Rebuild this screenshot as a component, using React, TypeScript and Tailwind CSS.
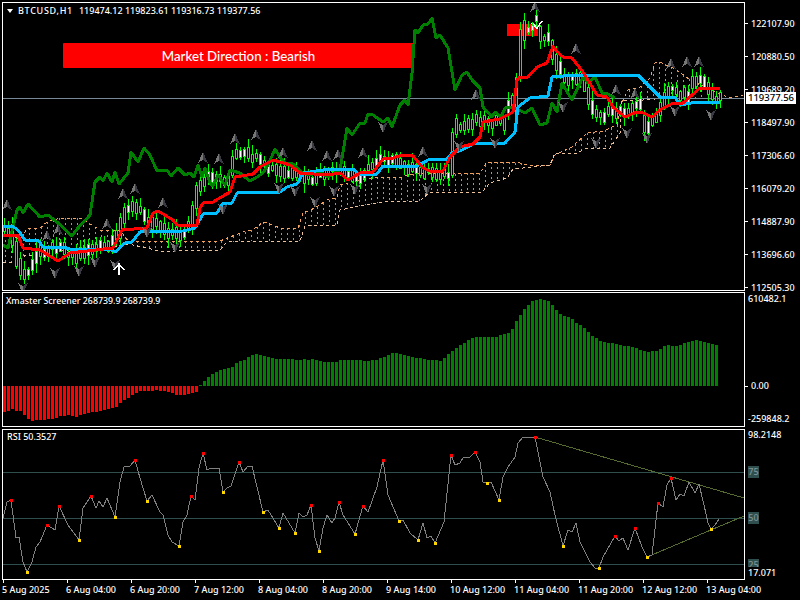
import type { ReactNode } from 'react';

type Pt = [number, number];

const GREEN: Pt[] = [[3,245],[8,248],[13,227],[17,210],[20,207],[23,213],[28,204],[40,217],[48,215],[58,223],[72,236],[78,228],[90,215],[95,182],[100,177],[103,181],[107,173],[112,182],[115,172],[119,184],[128,173],[131,152],[138,162],[144,148],[150,155],[157,171],[167,170],[171,176],[178,168],[185,175],[190,173],[194,177],[198,165],[202,177],[205,168],[210,183],[213,186],[218,175],[225,185],[230,170],[240,173],[250,181],[257,177],[263,173],[268,165],[275,149],[280,157],[285,163],[293,164],[302,173],[310,175],[320,172],[328,177],[340,170],[347,128],[352,135],[360,123],[365,123],[368,114],[373,115],[383,122],[388,118],[392,127],[400,105],[405,100],[408,105],[412,73],[415,30],[418,33],[423,25],[428,24],[432,18],[436,38],[440,35],[448,48],[455,90],[462,75],[467,72],[472,80],[480,88],[483,107],[492,117],[495,112],[501,117],[505,108],[513,107],[525,113],[532,108],[540,125],[547,123],[552,103],[557,112],[562,83],[572,100],[583,77],[588,83],[595,77],[602,93],[608,94],[615,98]];

const RED: Pt[] = [[3,235],[18,235],[23,248],[40,250],[58,261],[70,253],[113,248],[118,238],[122,230],[147,228],[153,213],[158,211],[173,220],[177,225],[197,225],[200,208],[203,203],[213,202],[230,192],[235,177],[253,174],[260,167],[273,160],[290,165],[300,173],[327,175],[340,173],[348,180],[360,173],[373,172],[383,159],[393,158],[403,155],[413,156],[423,168],[430,171],[443,171],[450,157],[460,147],[473,144],[480,137],[483,122],[500,119],[513,112],[517,80],[520,77],[528,77],[537,67],[547,63],[553,46],[558,53],[563,57],[572,58],[583,72],[597,95],[607,97],[613,107],[625,117],[637,112],[643,113],[652,117],[660,110],[673,103],[683,103],[700,88],[708,88],[720,89]];

const BLUE: Pt[] = [[3,226],[12,226],[18,230],[25,240],[38,240],[43,247],[63,247],[70,249],[110,249],[115,252],[125,243],[132,242],[140,232],[183,231],[195,228],[203,214],[217,213],[223,203],[232,203],[237,193],[260,192],[280,192],[287,187],[297,184],[303,173],[323,170],[353,169],[360,175],[377,174],[383,166],[417,166],[428,160],[447,159],[452,153],[462,150],[475,143],[505,143],[515,132],[518,107],[530,98],[548,96],[552,77],[563,76],[638,75],[660,97],[675,97],[680,105],[697,102],[720,102]];

const CLOUD_TOP: Pt[] = [[3,235],[20,238],[28,228],[40,228],[47,222],[60,218],[80,218],[95,227],[100,230],[120,230],[128,241],[220,241],[230,237],[243,232],[252,230],[257,227],[263,222],[270,224],[280,228],[298,228],[303,213],[315,208],[327,200],[337,198],[340,185],[360,180],[377,177],[400,178],[407,175],[423,173],[450,174],[480,173],[487,162],[510,162],[520,163],[527,165],[550,165],[555,155],[572,147],[587,133],[603,131],[617,125],[620,107],[628,90],[640,87],[650,78],[655,63],[660,62],[677,70],[690,80],[707,88],[722,95],[730,98],[743,95]];

const CLOUD_BOTTOM: Pt[] = [[3,262],[20,262],[25,255],[40,255],[43,248],[60,250],[85,253],[120,246],[128,244],[147,248],[163,252],[187,250],[220,250],[227,242],[260,241],[300,241],[305,226],[337,225],[340,210],[360,206],[383,202],[420,201],[430,192],[482,192],[490,183],[507,178],[513,169],[523,168],[550,165],[555,153],[577,153],[587,148],[610,148],[620,133],[622,100],[643,100],[667,98],[693,98],[720,99],[743,98]];

const PRICE: Pt[] = [[3,232],[9,228],[13,240],[18,262],[23,275],[30,270],[35,260],[40,250],[47,250],[60,245],[75,257],[85,250],[110,245],[118,235],[125,208],[135,207],[145,215],[155,222],[170,232],[180,235],[190,225],[198,190],[210,175],[220,178],[228,180],[236,155],[250,155],[258,160],[268,168],[280,172],[300,176],[315,180],[325,172],[345,172],[355,178],[365,172],[372,165],[380,155],[388,160],[405,165],[415,170],[435,172],[447,175],[451,170],[454,130],[465,125],[478,118],[495,122],[503,125],[507,110],[512,102],[516,95],[519,60],[524,30],[533,25],[537,20],[540,33],[550,40],[555,58],[565,80],[575,75],[585,85],[590,100],[597,115],[610,113],[640,105],[645,125],[650,127],[660,110],[670,85],[680,95],[688,95],[692,80],[703,78],[710,95],[720,97]];

const RSI: Pt[] = [[3,518],[7,502],[11,500],[13,515],[16,538],[19,537],[23,562],[27,572],[32,562],[36,547],[40,542],[47,525],[55,530],[59,506],[68,525],[79,540],[83,508],[91,496],[96,508],[99,501],[103,507],[107,498],[115,517],[120,482],[124,467],[130,466],[135,460],[140,478],[147,501],[152,495],[160,512],[163,515],[168,535],[172,542],[179,546],[183,522],[187,515],[191,496],[195,500],[199,468],[203,453],[207,470],[211,468],[215,469],[219,468],[223,492],[227,488],[231,486],[239,462],[243,472],[248,466],[252,466],[263,512],[268,510],[279,528],[283,513],[295,533],[299,513],[303,517],[307,515],[311,505],[315,538],[319,551],[323,528],[327,515],[332,523],[335,518],[339,502],[343,515],[355,534],[363,506],[368,512],[377,487],[383,460],[388,495],[399,521],[403,520],[410,533],[418,540],[423,523],[427,538],[431,536],[435,543],[444,522],[451,455],[455,465],[460,463],[463,458],[470,457],[475,452],[480,462],[483,482],[487,483],[491,482],[499,500],[503,477],[508,467],[515,457],[518,443],[523,437],[535,437],[543,477],[550,492],[555,515],[563,546],[568,530],[572,532],[576,523],[580,542],[590,562],[595,568],[599,568],[603,557],[615,536],[619,541],[623,538],[628,550],[635,528],[642,547],[647,557],[652,555],[658,503],[663,507],[667,485],[671,478],[676,500],[680,494],[684,496],[689,482],[695,493],[699,484],[704,505],[708,523],[711,529],[715,525],[719,519]];

const RSI_HIGHS: Pt[] = [[11,500],[47,525],[59,506],[91,496],[135,460],[191,496],[203,453],[239,462],[311,505],[339,502],[363,506],[383,460],[451,455],[475,452],[535,437],[615,536],[635,528],[658,503],[671,478]];
const RSI_LOWS: Pt[] = [[27,572],[79,540],[115,517],[147,501],[179,546],[223,492],[263,512],[279,528],[295,533],[319,551],[355,534],[399,521],[418,540],[435,543],[487,483],[499,500],[563,546],[599,568],[647,557],[711,529]];

const UP_ARROWS: Pt[] = [[7,205],[47,236],[58,230],[107,224],[123,194],[135,189],[163,203],[203,158],[219,159],[235,139],[256,135],[283,153],[312,146],[327,156],[338,155],[363,153],[423,152],[476,95],[535,7],[576,49],[616,90],[635,94],[671,64],[687,62],[699,62]];
const DOWN_ARROWS: Pt[] = [[23,288],[55,273],[79,271],[95,262],[115,265],[147,232],[175,247],[223,209],[279,188],[295,191],[315,202],[334,191],[355,189],[383,127],[427,189],[459,146],[495,143],[563,107],[596,143],[627,133],[647,138],[675,111],[711,115]];

// zoomed-in tops of the histogram, 303 is the zero line
const HIST_RED = [380,377,372,378,378,390,402,408,405,405,405,402,402,398,394,393,390,392,395,390,388,385,380,380,378,375,373,370,367,355,345,338,330,323,318,318,318,318,315,318,318,322,325,330,330,330,327,324,322];
const HIST_GREEN = [300,288,276,268,261,255,252,250,247,234,228,225,216,210,207,210,213,216,219,222,222,222,222,222,225,225,222,225,222,225,228,231,231,231,231,225,225,225,225,225,225,228,228,225,225,219,216,210,204,204,207,210,213,216,219,219,222,225,225,225,228,220,207,198,190,180,174,165,158,156,156,156,156,156,156,150,147,144,132,108,90,72,60,48,45,42,45,48,60,75,88,93,96,102,114,120,129,141,153,160,168,171,174,174,177,180,183,183,186,190,195,198,201,198,198,192,184,180,183,183,180,174,171,168,165,168,171,174,177,180];

const MAIN_SCALE = ['122107.90','120880.50','119689.20','118497.90','117306.60','116079.20','114887.90','113696.60','112505.30'];
const TIMES = ['5 Aug 2025','6 Aug 04:00','6 Aug 20:00','7 Aug 12:00','8 Aug 04:00','8 Aug 20:00','9 Aug 14:00','10 Aug 12:00','11 Aug 04:00','11 Aug 20:00','12 Aug 12:00','13 Aug 04:00'];

const toPath = (pts: Pt[]) => 'M' + pts.map((p) => p.join(' ')).join('L');
const noise = (n: number) => {
  const v = Math.sin(n * 12.9898) * 43758.5453;
  return v - Math.floor(v);
};

function interp(pts: Pt[], x: number) {
  if (x <= pts[0][0]) return pts[0][1];
  for (let i = 1; i < pts.length; i++) {
    if (x <= pts[i][0]) {
      const [x0, y0] = pts[i - 1];
      const [x1, y1] = pts[i];
      return y0 + ((y1 - y0) * (x - x0)) / (x1 - x0);
    }
  }
  return pts[pts.length - 1][1];
}

function Cloud() {
  let hatch = '';
  for (let x = 5; x < 744; x += 6) {
    const a = interp(CLOUD_TOP, x);
    const b = interp(CLOUD_BOTTOM, x);
    if (b - a > 3) hatch += `M${x} ${Math.round(a)}V${Math.round(b)}`;
  }
  return (
    <g fill="none" strokeWidth={1}>
      <path d={hatch} stroke="#c98a55" strokeDasharray="2 3" />
      <path d={toPath(CLOUD_TOP)} stroke="#f4a460" strokeDasharray="3 3" />
      <path d={toPath(CLOUD_BOTTOM)} stroke="#eec39a" strokeDasharray="3 3" />
    </g>
  );
}

function Candles() {
  const items = [];
  for (let i = 0; i < 180; i++) {
    const x = 3 + 4 * i;
    const mid = interp(PRICE, x + 1) + (noise(i) - 0.5) * 6;
    const slope = Math.abs(interp(PRICE, x - 2) - interp(PRICE, x + 4));
    const half = Math.max(2 + noise(i + 300) * 4, slope / 2);
    const top = Math.round(mid - half);
    const h = Math.round(half * 2);
    const high = Math.round(top - 1 - noise(i + 700) * 8);
    const low = Math.round(top + h + 1 + noise(i + 900) * 9);
    // the long bars in the rally are up bars, so they stay hollow
    const bear = noise(i + 500) > 0.68 && half < 7;
    items.push(
      <g key={i}>
        <rect x={x + 1} y={high} width={1} height={low - high} fill="#00ff00" />
        <rect x={x} y={top} width={3} height={h + 1} fill="#00ff00" />
        <rect x={x + 1} y={top + 1} width={1} height={Math.max(h - 1, 0)} fill={bear ? '#ffffff' : '#000000'} />
      </g>,
    );
  }
  return <g>{items}</g>;
}

function Fractal({ x, y, down }: { x: number; y: number; down?: boolean }) {
  return (
    <g transform={`translate(${x} ${y})${down ? ' scale(1 -1)' : ''}`}>
      <polygon points="0,-6 -5,5 0,2" fill="#767676" />
      <polygon points="0,-6 5,5 0,2" fill="#3a3a44" />
    </g>
  );
}

function MainChart() {
  return (
    <svg className="relative z-10 block" width={741} height={287} viewBox="3 3 741 287" shapeRendering="crispEdges">
      <rect x={507} y={24} width={31} height={12} fill="#ff0000" />
      <Cloud />
      <rect x={3} y={98} width={741} height={1} fill="#778899" />
      <path d="M532 23l5 5l5-7M537 28v1" fill="none" stroke="#ffffff" strokeWidth={1.5} />
      <Candles />
      <g fill="none" strokeWidth={3} strokeLinejoin="round">
        <path d={toPath(GREEN)} stroke="#008000" />
        <path d={toPath(BLUE)} stroke="#00bfff" />
        <path d={toPath(RED)} stroke="#ff0000" />
      </g>
      {UP_ARROWS.map(([x, y]) => (
        <Fractal key={`u${x}`} x={x} y={y} />
      ))}
      {DOWN_ARROWS.map(([x, y]) => (
        <Fractal key={`d${x}`} x={x} y={y} down />
      ))}
      <path d="M119 275V264M114 270l5-6l5 6" fill="none" stroke="#ffffff" strokeWidth={1.5} />
    </svg>
  );
}

function Histogram() {
  return (
    <svg className="block" width={741} height={133} viewBox="3 293 741 133" shapeRendering="crispEdges">
      {HIST_RED.map((v, i) => (
        <rect key={i} x={3 + 4 * i} y={386} width={3} height={Math.round((v - 303) / 3)} fill="#ff0000" />
      ))}
      {HIST_GREEN.map((v, i) => (
        <rect key={i} x={199 + 4 * i} y={386 - Math.round((303 - v) / 3)} width={3} height={Math.round((303 - v) / 3)} fill="#008000" />
      ))}
    </svg>
  );
}

function RsiChart() {
  return (
    <svg className="block" width={741} height={149} viewBox="3 430 741 149" shapeRendering="crispEdges">
      <g fill="#2f4f4f">
        <rect x={3} y={472} width={741} height={1} />
        <rect x={3} y={518} width={741} height={1} />
        <rect x={3} y={564} width={741} height={1} />
      </g>
      <g fill="none" stroke="#556b2f">
        <path d="M535 437L744 498" />
        <path d="M647 557L744 516" />
      </g>
      <path d={toPath(RSI)} fill="none" stroke="#808080" />
      {RSI_HIGHS.map(([x, y]) => (
        <rect key={x} x={x - 1} y={y - 1} width={3} height={3} fill="#ff0000" />
      ))}
      {RSI_LOWS.map(([x, y]) => (
        <rect key={x} x={x - 1} y={y - 1} width={3} height={3} fill="#ffd700" />
      ))}
    </svg>
  );
}

function Panel({ height, label, children }: { height: string; label?: ReactNode; children: ReactNode }) {
  return (
    <div className={`relative w-[743px] shrink-0 overflow-hidden border border-white bg-black ${height}`}>
      {children}
      {label}
    </div>
  );
}

function Tick() {
  return <span className="h-px w-[3px] shrink-0 bg-white" />;
}

export default function App() {
  return (
    <div className="flex h-[600px] w-[800px] flex-col overflow-hidden bg-black pt-[2px] pl-[2px] font-['Noto_Sans',sans-serif] text-[9px] leading-[12px] font-medium text-white">
      <div className="flex h-[289px]">
        <Panel
          height="h-[289px]"
          label={
            <div className="absolute top-[2px] left-[4px] z-20 flex h-[12px] items-center whitespace-pre">
              <span className="mr-[5px] h-0 w-0 border-x-[3px] border-t-[4px] border-x-transparent border-t-white" />
              <span className="mr-[6px] tracking-[0.7px]">BTCUSD,H1</span>
              <span>119474.12 119823.61 119316.73 119377.56</span>
            </div>
          }
        >
          <div className="absolute top-[40px] left-[60px] z-0 flex h-[25px] w-[351px] items-center justify-center rounded-[1px] bg-[#ff0000] font-['Lato',sans-serif] text-[13.3px]">
            Market Direction : Bearish
          </div>
          <MainChart />
        </Panel>
        <div className="relative flex-1 pt-[5px]">
          {MAIN_SCALE.map((v) => (
            <div key={v} className="flex h-[33px] items-center gap-[3px]">
              <Tick />
              <span>{v}</span>
            </div>
          ))}
          <div className="absolute top-[90px] left-px z-20 flex h-[12px] w-[50px] items-center justify-center bg-white text-[9.5px] text-black">
            119377.56
          </div>
        </div>
      </div>

      <div className="mt-px flex h-[135px]">
        <Panel height="h-[135px]" label={<div className="absolute top-[2px] left-[3px] text-[8.8px]">Xmaster Screener 268739.9 268739.9</div>}>
          <Histogram />
        </Panel>
        <div className="flex flex-1 flex-col pl-[3px]">
          <span className="mt-px">610482.1</span>
          <div className="mt-[75px] -ml-[3px] flex items-center gap-[3px]">
            <Tick />
            <span>0.00</span>
          </div>
          <span className="mt-[21px]">-259848.2</span>
        </div>
      </div>

      <div className="mt-[2px] flex h-[151px]">
        <Panel height="h-[151px]" label={<div className="absolute top-[1px] left-[4px]">RSI 50.3527</div>}>
          <RsiChart />
        </Panel>
        <div className="flex flex-1 flex-col pl-[3px]">
          <span>98.2148</span>
          <span className="mt-[25px] w-[11px] bg-[#2f4f4f] text-center text-[#7f9494]">75</span>
          <span className="mt-[34px] w-[11px] bg-[#2f4f4f] text-center text-[#7f9494]">50</span>
          <span className="mt-[35px] w-[11px] bg-[#2f4f4f] text-center text-[#7f9494]">25</span>
          <span className="relative -mt-[4px] bg-black">17.071</span>
        </div>
      </div>

      <div className="flex">
        {TIMES.map((t) => (
          <div key={t} className="w-[64px] shrink-0">
            <div className="ml-px h-[3px] w-px bg-white" />
            <div className="mt-[1px] whitespace-nowrap">{t}</div>
          </div>
        ))}
      </div>
    </div>
  );
}
